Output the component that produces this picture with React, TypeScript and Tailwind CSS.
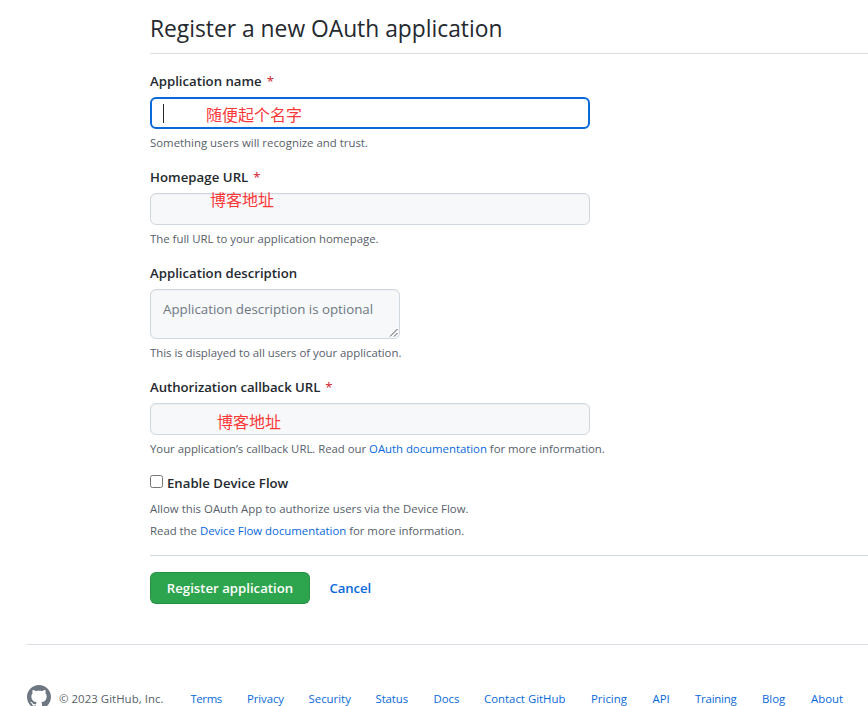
import type { ReactNode } from "react";

const links = [
  { label: "Terms", box: "w-[56.5px] tracking-[-0.4px]" },
  { label: "Privacy", box: "w-[61.5px] tracking-[-0.1px]" },
  { label: "Security", box: "w-[67px]" },
  { label: "Status", box: "w-[58px] tracking-[-0.1px]" },
  { label: "Docs", box: "w-[50.5px]" },
  { label: "Contact GitHub", box: "w-[107px]" },
  { label: "Pricing", box: "w-[61.5px]" },
  { label: "API", box: "w-[42.5px]" },
  { label: "Training", box: "w-[67px] tracking-[-0.2px]" },
  { label: "Blog", box: "w-[49px]" },
  { label: "About", box: "w-[40px]" },
];

function Label({ children, required, className = "" }: { children: ReactNode; required?: boolean; className?: string }) {
  return (
    <div className={`flex h-[21px] items-center pt-[2px] text-[13.2px] font-semibold text-[#24292f] ${className}`}>
      {children}
      {required && <span className="ml-[5px] font-normal text-[#cf222e]">*</span>}
    </div>
  );
}

function Note({ children, className = "" }: { children: ReactNode; className?: string }) {
  return <p className={`mt-1 h-[18px] text-[11.4px] leading-[19px] text-[#57606a] ${className}`}>{children}</p>;
}

function Annotation({ children, className }: { children: ReactNode; className: string }) {
  return (
    <span className={`absolute text-[16px] leading-5 text-[#fb3838] font-['Noto_Sans_CJK_SC',sans-serif] ${className}`}>
      {children}
    </span>
  );
}

const inputBox = "relative mt-1.5 h-8 w-[440px] rounded-md";
const restBox = "border border-[#d0d7de] bg-[#f6f8fa] shadow-[inset_0_1px_0_rgba(208,215,222,0.2)]";

export default function App() {
  return (
    <div className="h-[706px] w-full overflow-hidden whitespace-nowrap bg-white font-['Open_Sans','Noto_Sans',sans-serif]">
      <main className="ml-[150px] pt-[11px]">
        <h2 className="h-[43px] border-b border-[#d8dee4] text-[22.8px] leading-9 text-[#24292f]">
          Register a new OAuth application
        </h2>

        <form className="pt-4">
          <div className="mb-[15px]">
            <Label required>Application name</Label>
            <div className={`${inputBox} border-2 border-[#0969da] bg-white`}>
              <span className="absolute left-[11px] top-[5px] h-[19px] w-px bg-[#24292f]" />
              <Annotation className="left-[54px] top-[5px]">随便起个名字</Annotation>
            </div>
            <Note>Something users will recognize and trust.</Note>
          </div>

          <div className="mb-[15px]">
            <Label required className="tracking-[0.05px]">Homepage URL</Label>
            <div className={`${inputBox} ${restBox}`}>
              <Annotation className="left-[59px] top-[-5px]">博客地址</Annotation>
            </div>
            <Note>The full URL to your application homepage.</Note>
          </div>

          <div className="mb-[15px]">
            <Label>Application description</Label>
            <div className={`relative mt-1.5 h-[50px] w-[250px] rounded-md px-3 pt-[9px] text-[13.3px] leading-[21px] text-[#6e7781] ${restBox}`}>
              Application description is optional
              <svg className="absolute bottom-0 right-0 h-[11px] w-[11px]" viewBox="0 0 11 11" fill="none" stroke="#555" strokeWidth="1">
                <path d="M2 9.5 9.5 2M6 9.5 9.5 6" />
              </svg>
            </div>
            <Note className="tracking-[-0.02px]">This is displayed to all users of your application.</Note>
          </div>

          <div className="mb-[15px]">
            <Label required className="tracking-[-0.03px]">Authorization callback URL</Label>
            <div className={`${inputBox} ${restBox}`}>
              <Annotation className="left-[66px] top-[7px]">博客地址</Annotation>
            </div>
            <Note className="tracking-[-0.03px]">
              Your application’s callback URL. Read our <a className="text-[#0969da]">OAuth documentation</a> for more information.
            </Note>
          </div>

          <div className="flex h-[21px]">
            <span className="mt-[3px] size-[13px] rounded-[2.5px] border border-[#767676] bg-white" />
            <Label className="ml-1">Enable Device Flow</Label>
          </div>
          <div className="mt-[5px] text-[11.4px] leading-[22px] text-[#57606a]">
            <p className="tracking-[0.01px]">Allow this OAuth App to authorize users via the Device Flow.</p>
            <p className="tracking-[-0.02px]">
              Read the <a className="text-[#0969da]">Device Flow documentation</a> for more information.
            </p>
          </div>

          <div className="mt-[13px] flex items-center border-t border-[#d0d7de] pt-4 text-[13.2px] font-semibold">
            <button type="button" className="h-8 w-[160px] rounded-md border border-[#1b1f24]/15 bg-[#2da44e] pt-[2px] text-white">
              Register application
            </button>
            <a className="ml-[19.5px] pt-[2px] tracking-[-0.1px] text-[#0969da]">Cancel</a>
          </div>
        </form>
      </main>

      <footer className="ml-[27px] mt-10 border-t border-[#d8dee4] pt-[40px]">
        <div className="flex text-[11.4px] leading-[28px] text-[#57606a]">
          <svg className="size-6 shrink-0 fill-[#6e7781]" viewBox="0 0 16 16">
            <path d="M8 0C3.58 0 0 3.58 0 8c0 3.54 2.29 6.53 5.47 7.59.4.07.55-.17.55-.38 0-.19-.01-.82-.01-1.49-2.01.37-2.53-.49-2.69-.94-.09-.23-.48-.94-.82-1.13-.28-.15-.68-.52-.01-.53.63-.01 1.08.58 1.23.82.72 1.21 1.87.87 2.33.66.07-.52.28-.87.51-1.07-1.78-.2-3.64-.89-3.64-3.95 0-.87.31-1.59.82-2.15-.08-.2-.36-1.02.08-2.12 0 0 .67-.21 2.2.82.64-.18 1.32-.27 2-.27s1.36.09 2 .27c1.53-1.04 2.2-.82 2.2-.82.44 1.1.16 1.92.08 2.12.51.56.82 1.27.82 2.15 0 3.07-1.87 3.75-3.65 3.95.29.25.54.73.54 1.48 0 1.07-.01 1.93-.01 2.2 0 .21.15.46.55.38A8.01 8.01 0 0 0 16 8c0-4.42-3.58-8-8-8Z" />
          </svg>
          <span className="ml-2 w-[131.5px] shrink-0 tracking-[0.05px]">© 2023 GitHub, Inc.</span>
          <nav className="flex text-[#0969da]">
            {links.map((l) => (
              <a key={l.label} className={`shrink-0 ${l.box}`}>{l.label}</a>
            ))}
          </nav>
        </div>
      </footer>
    </div>
  );
}
